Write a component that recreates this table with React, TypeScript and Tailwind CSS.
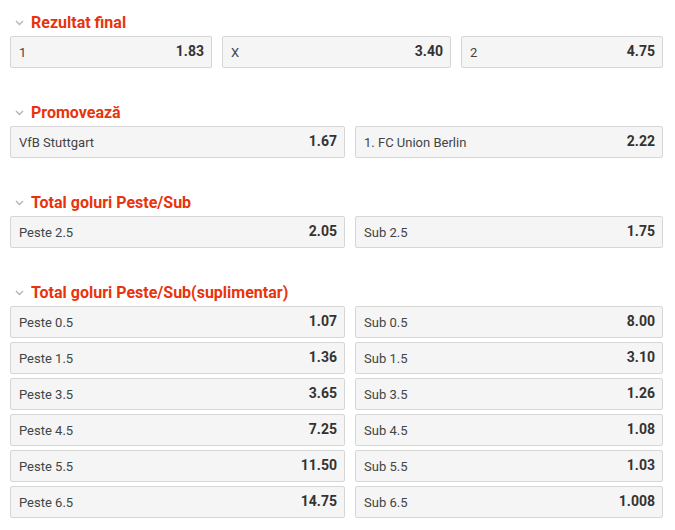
import React from "react";

type Odd = { label: string; value: string; w?: string };

interface Section {
  title: string;
  rows: Odd[][];
}

// left column in two-way markets is a bit wider than the right one
const L = "w-[335px]";

const sections: Section[] = [
  {
    title: "Rezultat final",
    rows: [
      [
        { label: "1", value: "1.83", w: "w-[202px]" },
        { label: "X", value: "3.40", w: "w-[229px]" },
        { label: "2", value: "4.75", w: "w-[202px]" },
      ],
    ],
  },
  {
    title: "Promovează",
    rows: [
      [
        { label: "VfB Stuttgart", value: "1.67", w: L },
        { label: "1. FC Union Berlin", value: "2.22" },
      ],
    ],
  },
  {
    title: "Total goluri Peste/Sub",
    rows: [
      [
        { label: "Peste 2.5", value: "2.05", w: L },
        { label: "Sub 2.5", value: "1.75" },
      ],
    ],
  },
  {
    title: "Total goluri Peste/Sub(suplimentar)",
    rows: [
      [
        { label: "Peste 0.5", value: "1.07", w: L },
        { label: "Sub 0.5", value: "8.00" },
      ],
      [
        { label: "Peste 1.5", value: "1.36", w: L },
        { label: "Sub 1.5", value: "3.10" },
      ],
      [
        { label: "Peste 3.5", value: "3.65", w: L },
        { label: "Sub 3.5", value: "1.26" },
      ],
      [
        { label: "Peste 4.5", value: "7.25", w: L },
        { label: "Sub 4.5", value: "1.08" },
      ],
      [
        { label: "Peste 5.5", value: "11.50", w: L },
        { label: "Sub 5.5", value: "1.03" },
      ],
      [
        { label: "Peste 6.5", value: "14.75", w: L },
        { label: "Sub 6.5", value: "1.008" },
      ],
    ],
  },
];

function Chevron() {
  return (
    <svg width="9" height="6" viewBox="0 0 9 6" className="mt-[1px]">
      <path d="M1 1l3.5 3.5L8 1" fill="none" stroke="#b5b5b5" strokeWidth="1.4" />
    </svg>
  );
}

function OddButton({ label, value, w }: Odd) {
  return (
    <div
      className={`${w ?? "flex-1"} h-[32px] flex items-center justify-between pl-[8px] pr-[7px] bg-[#f5f5f5] border border-[#d6d6d6] rounded-[2px]`}
    >
      <span className="text-[13px] text-[#444] pt-[2px]">{label}</span>
      <span className="text-[14px] font-bold text-[#333] pb-[1px]">{value}</span>
    </div>
  );
}

export default function App() {
  return (
    <div
      className="w-[675px] h-[530px] bg-white pl-[10px] pr-[12px] pt-[8px] overflow-hidden"
      style={{ fontFamily: "Roboto, 'Liberation Sans', sans-serif" }}
    >
      <div className="flex flex-col gap-[30px]">
        {sections.map((s) => (
          <div key={s.title}>
            <div className="h-[28px] flex items-center gap-[7px] pl-[5px] pt-[1px]">
              <Chevron />
              <h2 className="text-[16px] font-bold text-[#e8340c] leading-none">
                {s.title}
              </h2>
            </div>
            <div className="flex flex-col gap-[4px]">
              {s.rows.map((row, i) => (
                <div key={i} className="flex gap-[10px]">
                  {row.map((o) => (
                    <OddButton key={o.label} {...o} />
                  ))}
                </div>
              ))}
            </div>
          </div>
        ))}
      </div>
    </div>
  );
}
